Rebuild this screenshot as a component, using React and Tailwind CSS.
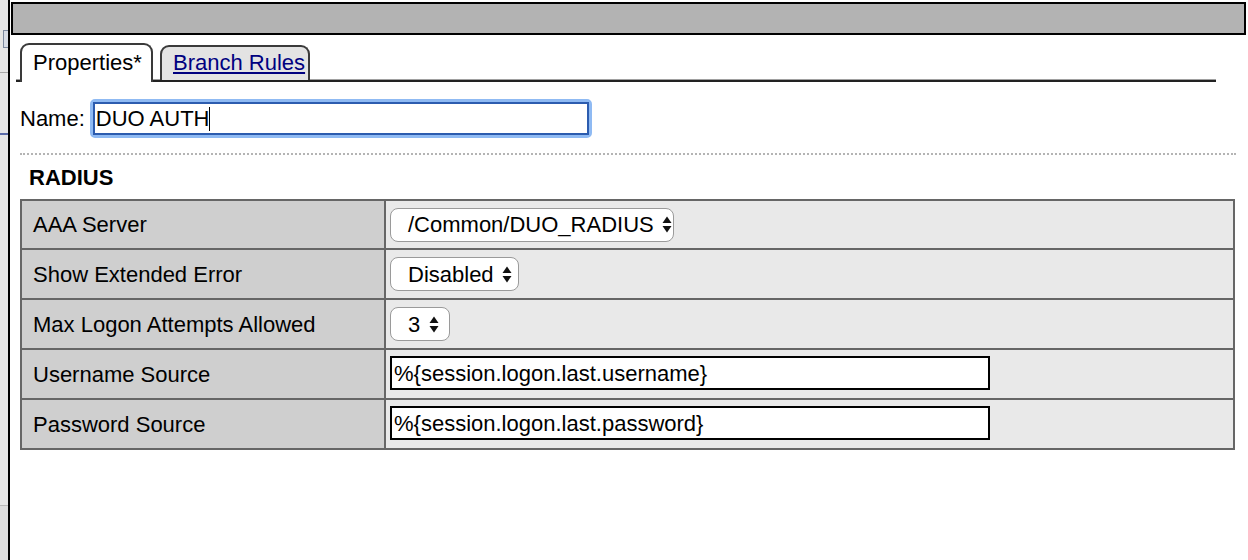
import React from 'react'

const FONT = { fontFamily: '"Liberation Sans", Arial, sans-serif' }

function Arrows() {
  return (
    <svg width="10" height="17" viewBox="0 0 10 17" className="shrink-0">
      <path d="M5 0.5 L9.5 7 L0.5 7 Z" fill="#111" />
      <path d="M0.5 10 L9.5 10 L5 16.5 Z" fill="#111" />
    </svg>
  )
}

function Select({ value, width }) {
  return (
    <div
      className={`${width} h-[34px] ml-[4px] bg-white border border-[#9a9a9a] rounded-[8px] flex items-center pl-[17px] pr-[10px] gap-[8px]`}
    >
      <span className="flex-1 whitespace-nowrap">{value}</span>
      <Arrows />
    </div>
  )
}

function TextBox({ value }) {
  return (
    <div className="w-[600px] h-[34px] ml-[4px] -mt-[2px] bg-white border-2 border-black flex items-center pl-[2px]">
      {value}
    </div>
  )
}

const ROWS = [
  { label: 'AAA Server', field: <Select value="/Common/DUO_RADIUS" width="w-[284px]" /> },
  { label: 'Show Extended Error', field: <Select value="Disabled" width="w-[129px]" /> },
  { label: 'Max Logon Attempts Allowed', field: <Select value="3" width="w-[60px]" /> },
  { label: 'Username Source', field: <TextBox value="%{session.logon.last.username}" /> },
  { label: 'Password Source', field: <TextBox value="%{session.logon.last.password}" /> },
]

export default function App() {
  return (
    <div className="w-[1248px] h-[560px] bg-white flex text-black text-[22px] overflow-hidden" style={FONT}>
      {/* window behind, cut off at the left */}
      <div className="w-[8px] h-full bg-[#e6e6e6] flex flex-col">
        <div className="h-[30px]" />
        <div className="h-[18px] w-[5px] ml-[3px] border border-[#7d8aa0] border-r-0 bg-[#d8dde6]" />
        <div className="h-[24px]" />
        <div className="h-px bg-[#a8a8a8]" />
        <div className="h-[60px]" />
        <div className="h-[2px] w-[8px] bg-[#5a6aa8]" />
        <div className="h-[370px]" />
        <div className="h-px bg-[#b8b8b8]" />
        <div className="flex-1 bg-[#dcdcdc]" />
      </div>
      <div className="w-[2px] h-full bg-black" />

      <div className="flex-1 flex flex-col">
        {/* title bar */}
        <div className="ml-px mt-[2px] w-[1235px] h-[33px] bg-[#b3b3b3] border-2 border-black" />

        {/* tabs */}
        <div className="ml-[6px] mt-[8px] w-[1200px] h-[39px] flex items-end border-b-2 border-[#222] shadow-[0_-1px_0_#a0a0a0_inset]">
          <div className="ml-[4px] -mb-[2px] w-[133px] h-[39px] bg-white border-2 border-b-0 border-[#3a3a3a] rounded-t-[9px] pl-[11px] pt-[5px] leading-[26px]">
            Properties*
          </div>
          <div className="ml-[7px] w-[150px] h-[35px] bg-[#e3e3e3] border-2 border-b-0 border-[#3a3a3a] rounded-t-[9px] pl-[11px] pt-[3px] leading-[26px]">
            <span className="text-[#000080] underline">Branch Rules</span>
          </div>
        </div>

        {/* name */}
        <div className="ml-[10px] mt-[17px] flex items-center">
          <span>Name:</span>
          <div className="ml-[5px] w-[502px] h-[39px] rounded-[5px] border-[3px] border-[#8fbaf3] flex">
            <div className="flex-1 border-2 border-[#2c5caf] bg-white flex items-center pl-[1px]">
              DUO AUTH<span className="inline-block w-px h-[24px] bg-black" />
            </div>
          </div>
        </div>

        <div className="ml-[10px] mt-[15px] w-[1216px] border-t-2 border-dotted border-[#b4b4b4]" />

        <div className="ml-[19px] mt-[10px] font-bold leading-[26px]">RADIUS</div>

        {/* properties table */}
        <div className="ml-[10px] mt-[8px] w-[1215px] border-2 border-[#666]">
          {ROWS.map((r, i) => (
            <div key={r.label} className={`flex ${i > 0 ? 'h-[50px] border-t-2 border-[#666]' : 'h-[47px]'}`}>
              <div className="w-[364px] shrink-0 bg-[#cfcfcf] border-r-2 border-[#666] flex items-center pl-[11px]">
                {r.label}
              </div>
              <div className="flex-1 bg-[#e9e9e9] flex items-center">{r.field}</div>
            </div>
          ))}
        </div>
      </div>
    </div>
  )
}
